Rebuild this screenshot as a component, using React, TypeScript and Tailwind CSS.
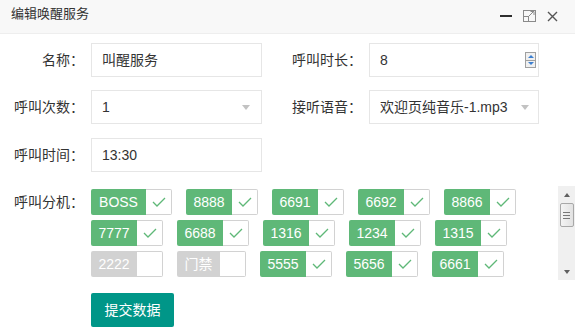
import React from 'react'

const font = { fontFamily: '"Liberation Sans", "Noto Sans CJK SC", sans-serif' }

type Ext = { name: string; w: number; on: boolean }

const rows: Ext[][] = [
  [
    { name: 'BOSS', w: 55, on: true },
    { name: '8888', w: 46, on: true },
    { name: '6691', w: 46, on: true },
    { name: '6692', w: 46, on: true },
    { name: '8866', w: 46, on: true },
  ],
  [
    { name: '7777', w: 46, on: true },
    { name: '6688', w: 46, on: true },
    { name: '1316', w: 46, on: true },
    { name: '1234', w: 46, on: true },
    { name: '1315', w: 46, on: true },
  ],
  [
    { name: '2222', w: 46, on: false },
    { name: '门禁', w: 43, on: false },
    { name: '5555', w: 46, on: true },
    { name: '5656', w: 46, on: true },
    { name: '6661', w: 46, on: true },
  ],
]

function Check({ ext }: { ext: Ext }) {
  return (
    <div className="flex h-[26px]">
      <div
        className={`flex items-center justify-center rounded-l-[2px] text-[14px] text-white ${ext.on ? 'bg-[#5FB878]' : 'bg-[#d2d2d2]'}`}
        style={{ width: ext.w }}
      >
        {ext.name}
      </div>
      <div className="flex w-[26px] items-center justify-center rounded-r-[2px] border border-l-0 border-[#d2d2d2] bg-white">
        {ext.on && (
          <svg width="14" height="10" viewBox="0 0 14 10">
            <polyline points="1,5 5,9 13,1" fill="none" stroke="#5FB878" strokeWidth="1.3" />
          </svg>
        )}
      </div>
    </div>
  )
}

function Label({ text, w }: { text: string; w: number }) {
  return (
    <div className="shrink-0 text-right text-[14px] leading-[34px] text-[#333]" style={{ width: w }}>
      {text}
    </div>
  )
}

function Arrow() {
  return <div className="h-0 w-0 border-x-[4px] border-t-[5px] border-x-transparent border-t-[#c2c2c2]" />
}

export default function App() {
  return (
    <div className="relative h-[332px] w-[575px] overflow-hidden bg-white" style={font}>
      <div className="flex h-[34px] items-start justify-between border-b border-[#eeeeee] bg-[#f8f8f8] pl-[11px] pt-[5px]">
        <span className="text-[13px] leading-[17px] text-[#333]">编辑唤醒服务</span>
        <div className="mr-[17px] mt-[5px] flex items-center gap-[11px]">
          <div className="h-[2px] w-[12px] bg-[#2e2e2e]" />
          <svg width="13" height="12" viewBox="0 0 13 12">
            <rect x="0.5" y="0.5" width="12" height="11" fill="none" stroke="#8a8a8a" />
            <rect x="0.5" y="6.5" width="5" height="5" fill="none" stroke="#8a8a8a" />
            <path d="M6 6 L11 1 M7.5 1.5 H11 V5" fill="none" stroke="#8a8a8a" />
          </svg>
          <svg width="11" height="11" viewBox="0 0 11 11">
            <path d="M1 1 L10 10 M10 1 L1 10" stroke="#555" strokeWidth="1.4" />
          </svg>
        </div>
      </div>

      <div className="pt-[9px]">
        <div className="flex items-center">
          <Label text="名称：" w={84} />
          <div className="ml-[7px] flex h-[34px] w-[171px] items-center border border-[#e6e6e6] pl-[10px] text-[14px] text-[#333]">
            叫醒服务
          </div>
          <Label text="呼叫时长：" w={100} />
          <div className="ml-[7px] flex h-[34px] w-[170px] items-center justify-between border border-[#e6e6e6] pl-[10px] pr-[2px] text-[14px] text-[#333]">
            8
            <div className="flex h-[16px] w-[11px] flex-col border border-[#a0a0a0] bg-[#f0f0f0]">
              <div className="flex flex-1 items-center justify-center border-b border-[#a0a0a0]">
                <div className="h-0 w-0 border-x-[3px] border-b-[3px] border-x-transparent border-b-[#3c7fd0]" />
              </div>
              <div className="flex flex-1 items-center justify-center">
                <div className="h-0 w-0 border-x-[3px] border-t-[3px] border-x-transparent border-t-[#3c7fd0]" />
              </div>
            </div>
          </div>
        </div>

        <div className="mt-[13px] flex items-center">
          <Label text="呼叫次数：" w={84} />
          <div className="ml-[7px] flex h-[34px] w-[171px] items-center justify-between border border-[#e6e6e6] pl-[10px] pr-[11px] text-[14px] text-[#333]">
            1
            <Arrow />
          </div>
          <Label text="接听语音：" w={100} />
          <div className="ml-[7px] flex h-[34px] w-[170px] items-center justify-between border border-[#e6e6e6] pl-[10px] pr-[9px] text-[14px] text-[#333]">
            欢迎页纯音乐-1.mp3
            <Arrow />
          </div>
        </div>

        <div className="mt-[14px] flex items-center">
          <Label text="呼叫时间：" w={84} />
          <div className="ml-[7px] flex h-[34px] w-[171px] items-center border border-[#e6e6e6] pl-[10px] text-[14px] text-[#333]">
            13:30
          </div>
        </div>

        <div className="mt-[14px] flex">
          <div className="w-[84px] shrink-0 pt-[3px] text-right text-[14px] leading-[26px] text-[#333]">呼叫分机：</div>
          <div className="ml-[7px] flex h-[94px] flex-1">
            <div className="flex flex-1 flex-col gap-[5px] pt-[3px]">
              {rows.map((row, i) => (
                <div key={i} className="flex gap-[14px]">
                  {row.map((ext) => (
                    <Check key={ext.name} ext={ext} />
                  ))}
                </div>
              ))}
            </div>
            <div className="flex w-[17px] flex-col items-center bg-[#f0f0f0]">
              <div className="flex h-[17px] items-center justify-center">
                <div className="h-0 w-0 border-x-[3.5px] border-b-[4px] border-x-transparent border-b-[#606060]" />
              </div>
              <div className="flex h-[24px] w-[14px] flex-col items-center justify-center gap-[2px] rounded-[2px] border border-[#a8a8a8] bg-gradient-to-r from-[#f4f4f4] to-[#e2e2e2]">
                <div className="h-px w-[7px] bg-[#777]" />
                <div className="h-px w-[7px] bg-[#777]" />
                <div className="h-px w-[7px] bg-[#777]" />
              </div>
              <div className="flex-1" />
              <div className="flex h-[17px] items-center justify-center">
                <div className="h-0 w-0 border-x-[3.5px] border-t-[4px] border-x-transparent border-t-[#606060]" />
              </div>
            </div>
          </div>
        </div>

        <div className="ml-[91px] mt-[13px]">
          <button className="h-[34px] w-[83px] rounded-[2px] bg-[#009688] text-[14px] text-white">提交数据</button>
        </div>
      </div>
    </div>
  )
}
